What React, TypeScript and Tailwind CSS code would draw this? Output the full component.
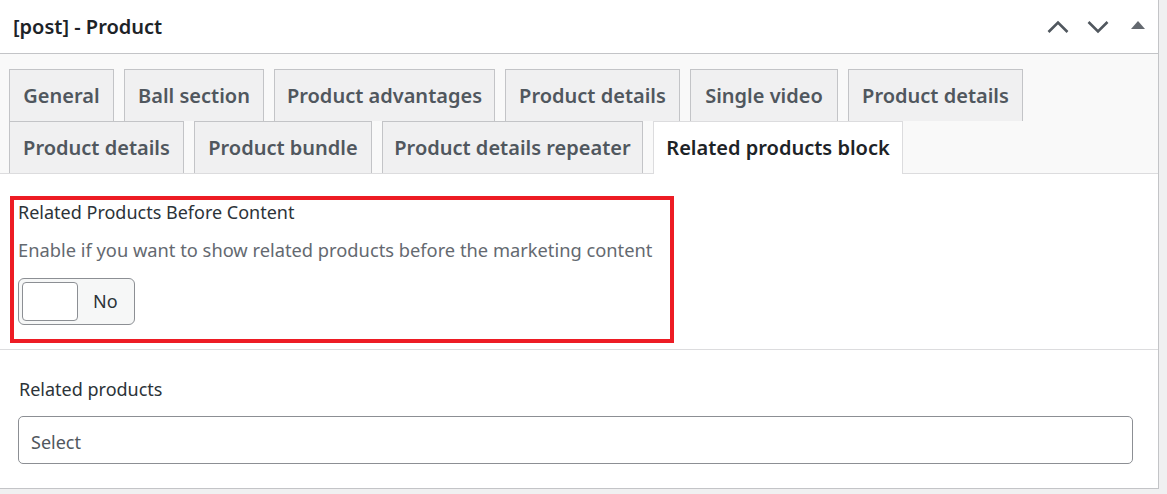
import React from 'react';

const rowOne = [
  { label: 'General', w: 'w-[105px]' },
  { label: 'Ball section', w: 'w-[140px]' },
  { label: 'Product advantages', w: 'w-[221px]' },
  { label: 'Product details', w: 'w-[175px]' },
  { label: 'Single video', w: 'w-[148px]' },
  { label: 'Product details', w: 'w-[175px]' },
];

const rowTwo = [
  { label: 'Product details', w: 'w-[175px]' },
  { label: 'Product bundle', w: 'w-[178px]' },
  { label: 'Product details repeater', w: 'w-[261px]' },
  { label: 'Related products block', w: 'w-[250px]', active: true },
];

const Tab: React.FC<{ label: string; w: string; active?: boolean }> = ({ label, w, active }) => (
  <div
    className={`${w} flex items-center justify-center border-t border-x border-[#c3c4c7] text-[20px] font-semibold whitespace-nowrap ${
      active ? 'h-[53px] -mb-px bg-white text-[#1d2327] relative z-10 border-[#dcdcde]' : 'h-[52px] bg-[#f0f0f1] text-[#50575e]'
    }`}
  >
    {label}
  </div>
);

export default function App() {
  return (
    <div className="w-[1167px] h-[494px] bg-[#f0f0f1] overflow-hidden font-['Noto_Sans',sans-serif]">
      <div className="w-[1159px] h-[489px] bg-white border-r border-b border-[#c3c4c7] flex flex-col">
        {/* header */}
        <div className="h-[54px] shrink-0 border-b border-[#c3c4c7] flex items-center justify-between pl-[13px] pr-[13px]">
          <h2 className="text-[20px] font-semibold text-[#1d2327]">[post] - Product</h2>
          <div className="flex items-center gap-[18px] text-[#50575e]">
            <svg width="22" height="14" viewBox="0 0 22 14" fill="none" stroke="currentColor" strokeWidth="2.6">
              <polyline points="1.5,12 11,2.5 20.5,12" />
            </svg>
            <svg width="22" height="14" viewBox="0 0 22 14" fill="none" stroke="currentColor" strokeWidth="2.6">
              <polyline points="1.5,2 11,11.5 20.5,2" />
            </svg>
            <svg width="14" height="9" viewBox="0 0 14 9" className="ml-[4px] mb-[3px] text-[#646970]">
              <polygon points="7,0 14,8 0,8" fill="currentColor" />
            </svg>
          </div>
        </div>

        {/* tabs */}
        <div className="shrink-0 bg-[#f9f9f9] border-b border-[#dcdcde] pt-[15px] pl-[9px]">
          <div className="flex gap-x-[10px]">
            {rowOne.map((t, i) => (
              <Tab key={i} label={t.label} w={t.w} />
            ))}
          </div>
          <div className="flex gap-x-[10px]">
            {rowTwo.map((t, i) => (
              <Tab key={i} label={t.label} w={t.w} active={t.active} />
            ))}
          </div>
        </div>

        {/* field 1 */}
        <div className="shrink-0 h-[176px] border-b border-[#dcdcde] pt-[22px] pl-[10px]">
          <div className="w-[664px] h-[147px] border-4 border-[#ed1c24] pl-[4px]">
            <div className="text-[18px] leading-[24px] text-[#2c3338]">Related Products Before Content</div>
            <div className="mt-[14px] text-[18.3px] leading-[24px] text-[#646970]">
              Enable if you want to show related products before the marketing content
            </div>
            <div className="mt-[16px] w-[117px] h-[47px] rounded-[6px] border border-[#8c8f94] bg-[#f6f7f7] flex items-center pl-[3px]">
              <div className="w-[56px] h-[39px] rounded-[4px] border border-[#8c8f94] bg-white" />
              <span className="ml-[15px] text-[18px] text-[#2c3338]">No</span>
            </div>
          </div>
        </div>

        {/* field 2 */}
        <div className="flex-1 pl-[18px] pr-[25px] pt-[27px]">
          <div className="pl-[1px] text-[18px] leading-[24px] text-[#2c3338]">Related products</div>
          <div className="mt-[15px] h-[48px] rounded-[5px] border border-[#8c8f94] bg-white flex items-center pl-[12px] pt-[4px] text-[18px] text-[#50575e]">
            Select
          </div>
        </div>
      </div>
    </div>
  );
}
